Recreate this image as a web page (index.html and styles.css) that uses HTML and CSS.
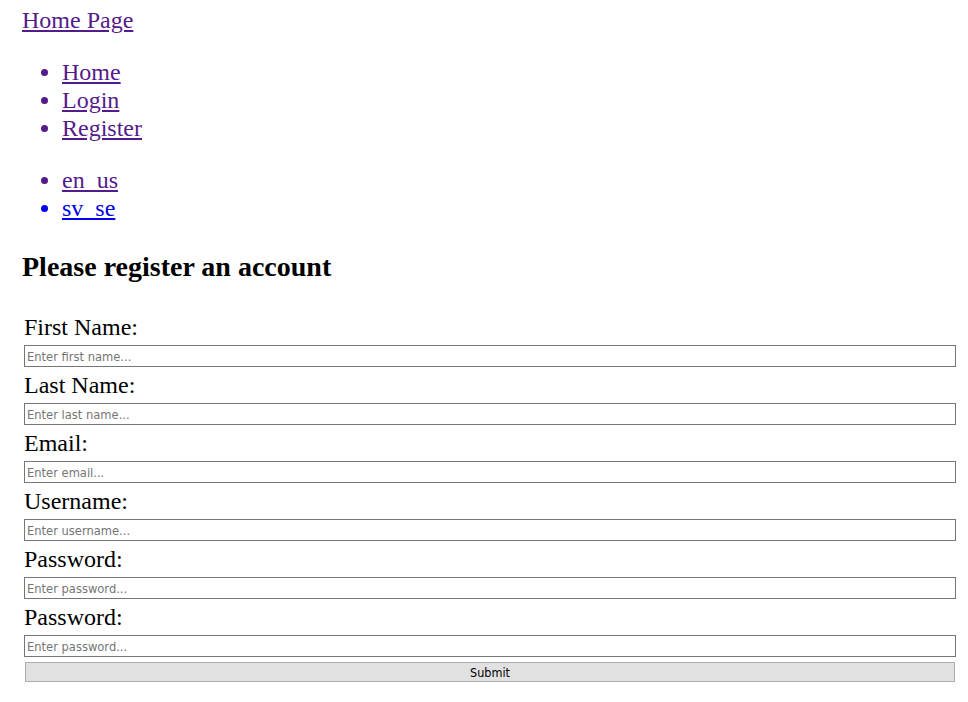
FILE: index.html
```html
<!DOCTYPE html>
<html lang="en">
<head>
<meta charset="utf-8">
<title>Register</title>
<link rel="stylesheet" href="styles.css">
</head>
<body>
<div class="page">
  <header class="header">
    <a class="visited" href="#">Home Page</a>
  </header>
  <ul class="menu">
    <li class="visited"><a href="#">Home</a></li>
    <li class="visited"><a href="#">Login</a></li>
    <li class="visited"><a href="#">Register</a></li>
  </ul>
  <ul class="menu">
    <li class="visited"><a href="#">en_us</a></li>
    <li class="fresh"><a href="#">sv_se</a></li>
  </ul>
  <h3 class="title">Please register an account</h3>
  <form class="form">
    <div class="field">
      <label class="label" for="fn">First Name:</label>
      <input class="input" id="fn" type="text" placeholder="Enter first name...">
    </div>
    <div class="field">
      <label class="label" for="ln">Last Name:</label>
      <input class="input" id="ln" type="text" placeholder="Enter last name...">
    </div>
    <div class="field">
      <label class="label" for="em">Email:</label>
      <input class="input" id="em" type="text" placeholder="Enter email...">
    </div>
    <div class="field">
      <label class="label" for="un">Username:</label>
      <input class="input" id="un" type="text" placeholder="Enter username...">
    </div>
    <div class="field">
      <label class="label" for="pw">Password:</label>
      <input class="input" id="pw" type="password" placeholder="Enter password...">
    </div>
    <div class="field">
      <label class="label" for="pw2">Password:</label>
      <input class="input" id="pw2" type="password" placeholder="Enter password...">
    </div>
    <button class="submit" type="button">Submit</button>
  </form>
</div>
</body>
</html>
```
FILE: styles.css
```css
html, body {
  margin: 0;
  padding: 0;
  background: #ffffff;
}

body {
  font-family: "Liberation Serif", "Times New Roman", serif;
  font-size: 24px;
  line-height: 28px;
  color: #000000;
}

.page {
  padding: 6px 12px 0 22px;
}

.header {
  display: block;
}

a {
  color: inherit;
  text-decoration: underline;
}

.visited {
  color: #551a8b;
}

.fresh {
  color: #0000ee;
}

.menu {
  margin: 24px 0;
  padding: 0 0 0 40px;
  list-style: disc;
}

.title {
  font-size: 28px;
  line-height: 32px;
  font-weight: bold;
  margin: 29px 0 27px 0;
}

.form {
  margin: 27px 0 0 2px;
}

.field {
  display: flex;
  flex-direction: column;
  margin-bottom: 1px;
}

.label {
  display: block;
  line-height: 28px;
  padding-top: 3px;
}

.input {
  display: block;
  box-sizing: border-box;
  width: 100%;
  height: 22px;
  margin: 4px 0 0 0;
  padding: 1px 2px;
  border: 1px solid #767676;
  border-radius: 0;
  background: #ffffff;
  font-family: "DejaVu Sans Condensed", "DejaVu Sans", sans-serif;
  font-size: 12.8px;
  color: #000000;
  outline: none;
}

.input::placeholder {
  color: #757575;
  opacity: 1;
}

.submit {
  display: block;
  box-sizing: border-box;
  width: calc(100% - 2px);
  height: 20px;
  margin: 5px 1px 0 1px;
  padding: 1px 0 0 0;
  border: 1px solid #adadad;
  border-radius: 0;
  background: #e1e1e1;
  font-family: "DejaVu Sans Condensed", "DejaVu Sans", sans-serif;
  font-size: 12.5px;
  line-height: 17px;
  color: #000000;
  text-align: center;
}
```
